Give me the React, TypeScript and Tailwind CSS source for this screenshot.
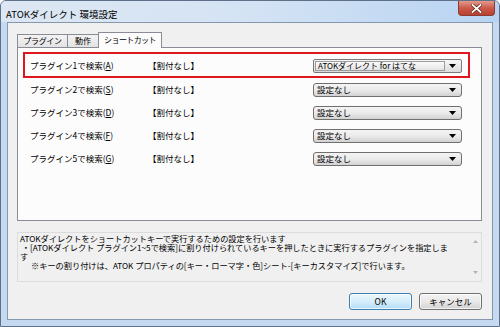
import React from 'react';

const rows = [
  { label: 'プラグイン1で検索', key: 'A', value: 'ATOKダイレクト for はてな', active: true },
  { label: 'プラグイン2で検索', key: 'S', value: '設定なし', active: false },
  { label: 'プラグイン3で検索', key: 'D', value: '設定なし', active: false },
  { label: 'プラグイン4で検索', key: 'F', value: '設定なし', active: false },
  { label: 'プラグイン5で検索', key: 'G', value: '設定なし', active: false },
];

function Arrow() {
  return (
    <svg width="7" height="4" viewBox="0 0 7 4" className="shrink-0">
      <path d="M0 0H7L3.5 4Z" fill="#000" />
    </svg>
  );
}

function Combo({ value, active }: { value: string; active: boolean }) {
  if (active) {
    return (
      <div className="ml-auto w-[149px] h-[14px] rounded-[2px] border border-[#7a7a7a] bg-gradient-to-b from-[#f7f7f7] to-[#dcdcdc] flex items-stretch p-px">
        <div className="flex-1 border border-[#9c9c9c] bg-gradient-to-b from-[#fbfbfb] to-[#e4e4e4] flex items-center pl-[2px] text-[8px] leading-none whitespace-nowrap">
          {value}
        </div>
        <div className="w-[15px] flex items-center justify-center">
          <Arrow />
        </div>
      </div>
    );
  }
  return (
    <div className="ml-auto w-[149px] h-[14px] rounded-[3px] border border-[#707070] bg-gradient-to-b from-[#f4f4f4] via-[#ebebeb] to-[#d2d2d2] flex items-center pl-[3px] pr-[5px] text-[8.5px] leading-none">
      <span className="flex-1">{value}</span>
      <Arrow />
    </div>
  );
}

function Tri({ up }: { up?: boolean }) {
  return (
    <svg width="5" height="3" viewBox="0 0 5 3">
      <path d={up ? 'M0 3H5L2.5 0Z' : 'M0 0H5L2.5 3Z'} fill="#b4b4b4" />
    </svg>
  );
}

export default function App() {
  return (
    <div className="w-[500px] h-[327px] flex flex-col border border-[#5f7188] rounded-t-[6px] bg-[#c5d9f0] overflow-hidden font-['Noto_Sans_CJK_JP','Noto_Sans',sans-serif] text-black">
      {/* title bar */}
      <div className="h-[21px] shrink-0 flex items-start justify-between bg-gradient-to-r from-[#dde7f3] via-[#d4e3f4] to-[#b8d3f2]">
        <div className="pl-[5px] pt-[8px] text-[9.5px] leading-[10px] whitespace-nowrap">ATOKダイレクト 環境設定</div>
        <div className="mr-[4px] w-[37px] h-[15px] rounded-b-[4px] border border-t-0 border-[#8a3b33] bg-gradient-to-b from-[#e49a8c] via-[#cc5a4a] to-[#b8402f] flex items-center justify-center">
          <svg width="11" height="9" viewBox="0 0 11 9">
            <path d="M1.5 1L9.5 8M9.5 1L1.5 8" stroke="#5a1d17" strokeWidth="3.2" strokeLinecap="square" />
            <path d="M1.5 1L9.5 8M9.5 1L1.5 8" stroke="#ffffff" strokeWidth="1.8" strokeLinecap="square" />
          </svg>
        </div>
      </div>

      {/* client */}
      <div className="mx-[6px] h-[298px] shrink-0 border border-[#8597ad] bg-[#f0f0f0] flex flex-col pt-[9px] pl-[9px] pr-[10px] pb-[9px]">
        {/* tabs */}
        <div className="h-[15px] flex items-end relative z-10 text-[8px] leading-none">
          <div className="w-[51px] h-[13px] border border-b-0 border-[#898c95] bg-gradient-to-b from-[#f3f3f3] to-[#e3e3e3] flex items-center justify-center tracking-[-0.3px]">
            プラグイン
          </div>
          <div className="-ml-px w-[32px] h-[13px] border border-b-0 border-[#898c95] bg-gradient-to-b from-[#f3f3f3] to-[#e3e3e3] flex items-center justify-center">
            動作
          </div>
          <div className="-ml-px w-[64px] h-[16px] -mb-px border border-b-0 border-[#898c95] bg-[#fcfcfc] flex items-start pt-[3px] justify-center tracking-[-0.6px]">
            ショートカット
          </div>
        </div>

        {/* tab panel */}
        <div className="h-[174px] shrink-0 border border-[#898c95] bg-[#fcfcfc] pt-[4px] pl-[5px] pr-[11px] flex flex-col text-[8.5px] leading-none">
          {rows.map((r) => (
            <div
              key={r.key}
              className={
                r.active
                  ? 'h-[26px] shrink-0 border-2 border-[#e0161e] flex items-center pl-[5px] pr-[6px] pt-px'
                  : 'h-[23px] shrink-0 border-x-2 border-transparent flex items-center pl-[5px] pr-[6px]'
              }
            >
              <div className="w-[118px] whitespace-nowrap">
                {r.label}(<span className="underline">{r.key}</span>)
              </div>
              <div className="whitespace-nowrap">【割付なし】</div>
              <Combo value={r.value} active={r.active} />
            </div>
          ))}
        </div>

        {/* description */}
        <div className="mt-[11px] h-[50px] shrink-0 border border-[#dcdcdc] bg-[#f0f0f0] flex">
          <div className="flex-1 pl-[2px] pt-px text-[8.2px] leading-[9px] whitespace-pre">
            <div>ATOKダイレクトをショートカットキーで実行するための設定を行います</div>
            <div> ・[ATOKダイレクト プラグイン1~5で検索]に割り付けられているキーを押したときに実行するプラグインを指定しま</div>
            <div>す</div>
            <div>      ※キーの割り付けは、ATOK プロパティの[キー・ローマ字・色]シート-[キーカスタマイズ]で行います。</div>
          </div>
          <div className="w-[11px] flex flex-col items-center justify-between py-[7px]">
            <Tri up />
            <Tri />
          </div>
        </div>

        {/* buttons */}
        <div className="mt-[11px] h-[17px] shrink-0 flex justify-end gap-[7px] text-[8.5px] leading-none">
          <div className="w-[63px] h-[17px] rounded-[3px] border border-[#3c7fb1] bg-gradient-to-b from-[#ecf7fd] via-[#d6eefb] to-[#b2dcf5] shadow-[inset_0_0_0_1px_rgba(255,255,255,0.7)] flex items-center justify-center">
            OK
          </div>
          <div className="w-[63px] h-[17px] rounded-[3px] border border-[#707070] bg-gradient-to-b from-[#f3f3f3] via-[#e9e9e9] to-[#d2d2d2] shadow-[inset_0_0_0_1px_rgba(255,255,255,0.7)] flex items-center justify-center">
            キャンセル
          </div>
        </div>
      </div>
    </div>
  );
}
